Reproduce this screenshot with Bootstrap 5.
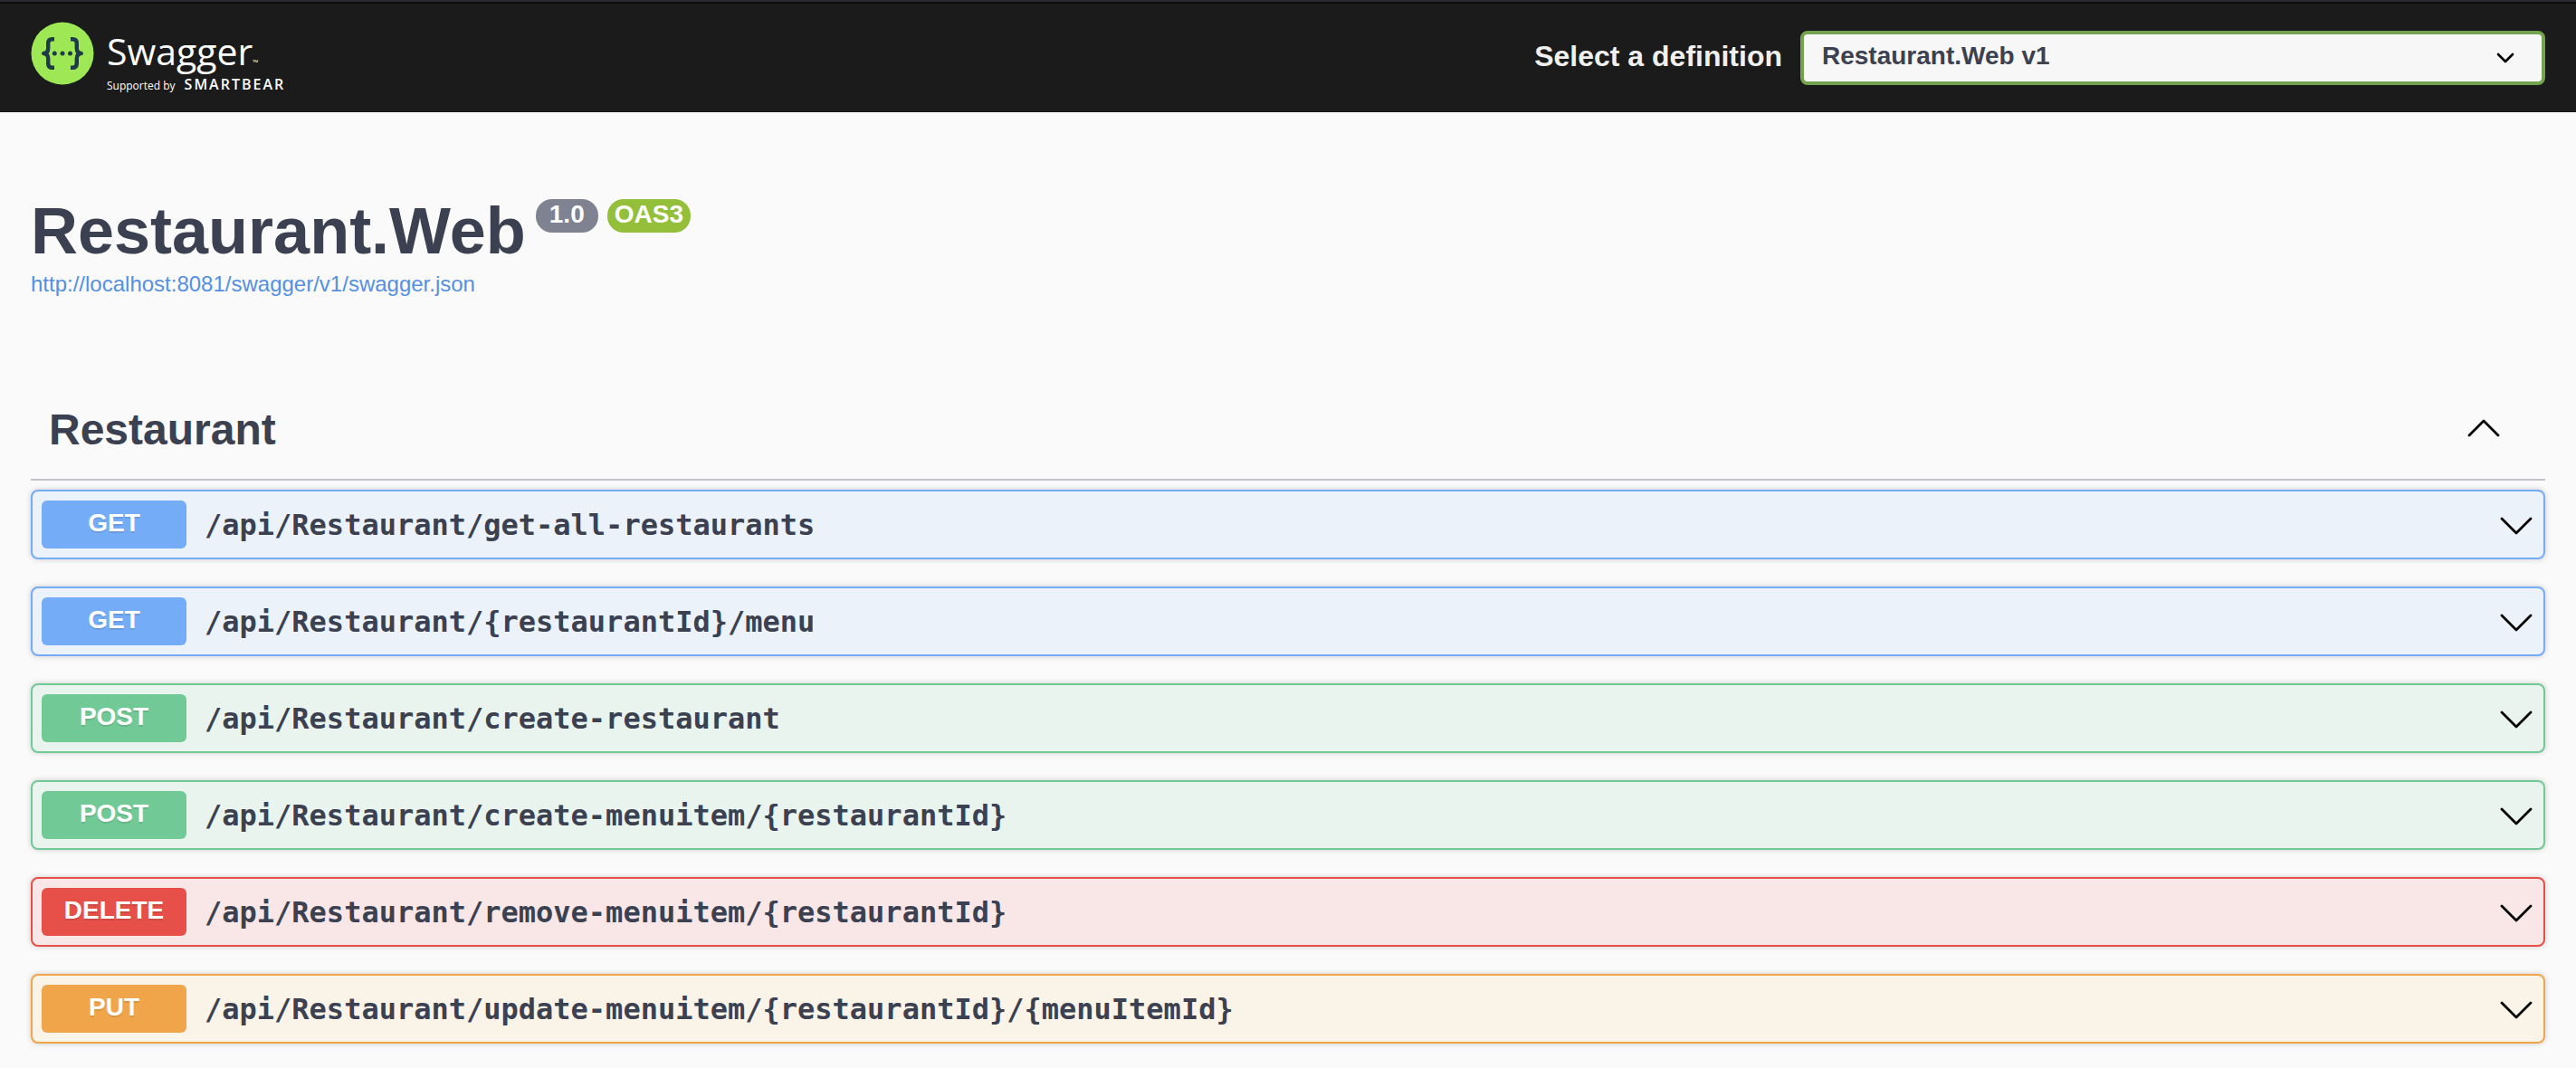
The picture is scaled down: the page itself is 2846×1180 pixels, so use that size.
<!DOCTYPE html>
<html lang="en">
<head>
<meta charset="utf-8">
<meta name="viewport" content="width=device-width, initial-scale=1">
<title>Swagger UI</title>
<link rel="stylesheet" href="https://cdn.jsdelivr.net/npm/bootstrap@5.3.0/dist/css/bootstrap.min.css">
<style>
  body { background: #fafafa; color: #3b4151; font-family: "Liberation Sans", Arial, sans-serif; }
  .page-gutter { padding-left: 34px; padding-right: 34px; }

  /* Top bar */
  .topbar { background: #1b1b1b; border-top: 2px solid #2b2a33; box-shadow: inset 0 2px 0 #0c0c0d; padding-top: 20px; padding-bottom: 18px; }
  .brand { gap: 14px; color: #fff; font-family: "Open Sans", sans-serif; }
  .brand:hover { color: #fff; }
  .brand-icon { width: 70px; height: 70px; margin-top: 2px; }
  .brand-text { padding-top: 8px; }
  .brand-name { font-size: 41px; line-height: 52px; }
  .brand-tm { font-size: 8px; line-height: 8px; }
  .brand-by { font-size: 12px; line-height: 22px; gap: 10px; }
  .brand-owner { font-size: 16px; font-weight: 600; letter-spacing: 2px; }
  .picker { flex: 0 1 1118px; gap: 20px; }
  .picker-label { color: #f0f0f0; font-size: 32px; line-height: 40px; padding-bottom: 4px; }
  .picker-select {
    flex: 0 1 823px; height: 60px; padding: 0 80px 4px 20px; border: 4px solid #73a34f; border-radius: 8px;
    background-color: #f7f7f7; color: #3b4151; font-size: 28px; line-height: 40px;
    background-image: url("data:image/svg+xml,%3Csvg xmlns='http://www.w3.org/2000/svg' viewBox='0 0 20 20'%3E%3Cpath d='M2 6l8 8 8-8' fill='none' stroke='%23000' stroke-width='2.6' stroke-linecap='round' stroke-linejoin='round'/%3E%3C/svg%3E");
    background-size: 20px; background-position: right 30px center;
  }

  /* API title */
  .api-info { padding-top: 91px; padding-bottom: 90px; }
  .api-title { gap: 11px; font-size: 72px; line-height: 80px; }
  .api-tags { gap: 10px; padding-top: 5px; }
  .api-tag { border-radius: 18px; font-size: 28px; line-height: 33px; padding: 0 15px 4px; background: #7f8391; color: #fff; }
  .api-tag-oas { background: #93bf3b; padding-left: 8px; padding-right: 8px; }
  .api-url { color: #5590e0; font-size: 24px; line-height: 30px; margin-top: 4px; }

  /* Tag section */
  .tag-head { border-bottom: 2px solid #c1c3c8; color: #3b4151; padding: 24px 48px 22px 20px; margin-bottom: 10px; }
  .tag-name { font-size: 48px; line-height: 64px; }
  .chevron { width: 40px; height: 40px; fill: none; stroke: #000; stroke-width: 2.8; stroke-linecap: round; stroke-linejoin: round; }

  /* Operations */
  .op-list { gap: 30px; padding-bottom: 27px; }
  .op { border: 2px solid var(--tone); border-radius: 8px; background: var(--tint); color: #3b4151; box-shadow: 0 0 6px rgba(0, 0, 0, .19); padding: 10px; gap: 20px; }
  .op-method { width: 160px; border-radius: 6px; background: var(--tone); color: #fff; font-size: 28px; line-height: 49px; padding-bottom: 4px; text-shadow: 0 2px 0 rgba(0, 0, 0, .1); }
  .op-path { font-family: "DejaVu Sans Mono", monospace; font-size: 32px; line-height: 40px; }
  .op-get { --tone: #74acf8; --tint: #ebf2fa; }
  .op-post { --tone: #71c996; --tint: #e9f4ee; }
  .op-delete { --tone: #e65049; --tint: #f8e7e6; }
  .op-put { --tone: #f0a54b; --tint: #faf3e8; }
</style>
</head>
<body>
<header class="topbar page-gutter d-flex justify-content-between align-items-center">
  <a class="brand d-flex align-items-start text-decoration-none" href="#">
    <svg class="brand-icon" viewBox="0 0 70 70" aria-hidden="true">
      <circle cx="35" cy="35" r="34.5" fill="#9fe855"/>
      <g fill="none" stroke="#1f3a47" stroke-width="4.4" stroke-linejoin="round">
        <path d="M26 19.2h-2.2c-3 0-4.6 1.6-4.6 4.6v5.4c0 3.6-1.4 5.6-5 5.8 3.6.2 5 2.2 5 5.8v5.4c0 3 1.6 4.6 4.6 4.6H26"/>
        <path d="M44 19.2h2.2c3 0 4.6 1.6 4.6 4.6v5.4c0 3.6 1.4 5.6 5 5.8-3.6.2-5 2.2-5 5.8v5.4c0 3-1.6 4.6-4.6 4.6H44"/>
      </g>
      <g fill="#1f3a47"><circle cx="26.3" cy="35" r="2.5"/><circle cx="35" cy="35" r="2.5"/><circle cx="43.5" cy="35" r="2.5"/></g>
    </svg>
    <span class="brand-text d-flex flex-column">
      <span class="brand-name">Swagger<span class="brand-tm">™</span></span>
      <span class="brand-by d-flex align-items-baseline"><span>Supported by</span><span class="brand-owner">SMARTBEAR</span></span>
    </span>
  </a>
  <div class="picker d-flex align-items-center justify-content-end">
    <label class="picker-label fw-bold text-nowrap" for="definition">Select a definition</label>
    <select class="picker-select form-select fw-bold" id="definition">
      <option selected>Restaurant.Web v1</option>
    </select>
  </div>
</header>

<main class="page-gutter">
  <section class="api-info">
    <div class="d-flex align-items-start api-title">
      <h1 class="fw-bold m-0 api-title">Restaurant.Web</h1>
      <div class="api-tags d-flex fw-bold">
        <span class="api-tag">1.0</span>
        <span class="api-tag api-tag-oas">OAS3</span>
      </div>
    </div>
    <a class="api-url d-table text-decoration-none" href="#">http://localhost:8081/swagger/v1/swagger.json</a>
  </section>

  <section>
    <button class="tag-head btn rounded-0 border-top-0 border-start-0 border-end-0 w-100 d-flex justify-content-between align-items-center" type="button" aria-expanded="true" aria-label="Restaurant">
      <span class="tag-name fw-bold">Restaurant</span>
      <svg class="chevron" viewBox="0 0 40 40" aria-hidden="true"><path d="M4 26l16-16 16 16"/></svg>
    </button>
    <div class="op-list d-flex flex-column">
      <button class="op op-get d-flex align-items-center text-start" type="button">
        <span class="op-method fw-bold text-center">GET</span>
        <span class="op-path fw-bold">/api/Restaurant/get-all-restaurants</span>
        <svg class="chevron ms-auto" viewBox="0 0 40 40" aria-hidden="true"><path d="M4 13l16 16 16-16"/></svg>
      </button>
      <button class="op op-get d-flex align-items-center text-start" type="button">
        <span class="op-method fw-bold text-center">GET</span>
        <span class="op-path fw-bold">/api/Restaurant/{restaurantId}/menu</span>
        <svg class="chevron ms-auto" viewBox="0 0 40 40" aria-hidden="true"><path d="M4 13l16 16 16-16"/></svg>
      </button>
      <button class="op op-post d-flex align-items-center text-start" type="button">
        <span class="op-method fw-bold text-center">POST</span>
        <span class="op-path fw-bold">/api/Restaurant/create-restaurant</span>
        <svg class="chevron ms-auto" viewBox="0 0 40 40" aria-hidden="true"><path d="M4 13l16 16 16-16"/></svg>
      </button>
      <button class="op op-post d-flex align-items-center text-start" type="button">
        <span class="op-method fw-bold text-center">POST</span>
        <span class="op-path fw-bold">/api/Restaurant/create-menuitem/{restaurantId}</span>
        <svg class="chevron ms-auto" viewBox="0 0 40 40" aria-hidden="true"><path d="M4 13l16 16 16-16"/></svg>
      </button>
      <button class="op op-delete d-flex align-items-center text-start" type="button">
        <span class="op-method fw-bold text-center">DELETE</span>
        <span class="op-path fw-bold">/api/Restaurant/remove-menuitem/{restaurantId}</span>
        <svg class="chevron ms-auto" viewBox="0 0 40 40" aria-hidden="true"><path d="M4 13l16 16 16-16"/></svg>
      </button>
      <button class="op op-put d-flex align-items-center text-start" type="button">
        <span class="op-method fw-bold text-center">PUT</span>
        <span class="op-path fw-bold">/api/Restaurant/update-menuitem/{restaurantId}/{menuItemId}</span>
        <svg class="chevron ms-auto" viewBox="0 0 40 40" aria-hidden="true"><path d="M4 13l16 16 16-16"/></svg>
      </button>
    </div>
  </section>
</main>
<script src="https://cdn.jsdelivr.net/npm/bootstrap@5.3.0/dist/js/bootstrap.bundle.min.js"></script>
</body>
</html>
